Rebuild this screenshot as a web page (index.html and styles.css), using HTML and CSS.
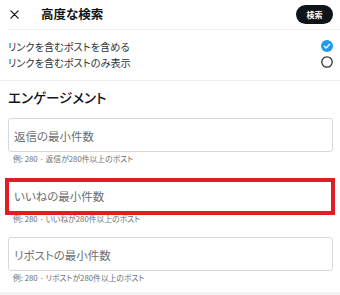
FILE: index.html
```html
<!DOCTYPE html>
<html lang="ja">
<head>
<meta charset="utf-8">
<link rel="stylesheet" href="styles.css">
</head>
<body>
<div class="page">
  <header class="topbar">
    <span class="close">
      <svg width="9" height="9" viewBox="0 0 10 10"><path d="M1 1L9 9M9 1L1 9" stroke="#0f1419" stroke-width="1.4" stroke-linecap="round"/></svg>
    </span>
    <h1 class="title">高度な検索</h1>
    <button class="search-btn">検索</button>
  </header>
  <section class="options">
    <div class="opt-row">
      <span>リンクを含むポストを含める</span>
      <span class="check on">
        <svg width="12" height="12" viewBox="0 0 12 12"><circle cx="6" cy="6" r="6" fill="#1d9bf0"/><path d="M3.3 6.2L5.1 8L8.7 4.3" stroke="#fff" stroke-width="1.4" fill="none" stroke-linecap="round" stroke-linejoin="round"/></svg>
      </span>
    </div>
    <div class="opt-row">
      <span>リンクを含むポストのみ表示</span>
      <span class="check">
        <svg width="12" height="12" viewBox="0 0 12 12"><circle cx="6" cy="6" r="5.2" fill="none" stroke="#333" stroke-width="1.3"/></svg>
      </span>
    </div>
  </section>
  <section class="engage">
    <h2 class="heading">エンゲージメント</h2>
    <div class="field">
      <div class="input">返信の最小件数</div>
      <div class="helper">例: 280 · 返信が280件以上のポスト</div>
    </div>
    <div class="field">
      <div class="input hl">いいねの最小件数<span class="mark"></span></div>
      <div class="helper">例: 280 · いいねが280件以上のポスト</div>
    </div>
    <div class="field">
      <div class="input">リポストの最小件数</div>
      <div class="helper">例: 280 · リポストが280件以上のポスト</div>
    </div>
  </section>
  <div class="footer-band"></div>
</div>
</body>
</html>
```
FILE: styles.css
```css
* { box-sizing: border-box; }
html, body { margin: 0; padding: 0; background: #fff; }
body {
  font-family: "Noto Sans CJK JP", "Noto Sans", sans-serif;
  font-feature-settings: "palt";
  color: #0f1419;
  width: 340px;
  height: 295px;
  overflow: hidden;
}
.page { display: flex; flex-direction: column; }
.topbar {
  height: 30px;
  display: flex;
  align-items: center;
  padding: 0 7px 0 1px;
  border-bottom: 1px solid #eef1f2;
  margin: 0 0 0 8px;
}
.close { width: 10px; height: 10px; display: flex; align-items: center; justify-content: center; }
.title {
  margin: 0 0 0 22px;
  font-size: 12.5px;
  font-weight: 700;
  flex: 1;
  line-height: 18px;
  padding-bottom: 1px;
}
.search-btn {
  border: 0;
  background: #0f1419;
  color: #fff;
  font-family: inherit;
  font-feature-settings: "palt";
  font-size: 8px;
  font-weight: 700;
  height: 19px;
  width: 37px;
  border-radius: 10px;
  padding: 0;
  margin-bottom: 1px;
}
.options {
  padding: 8px 7px 10px 8px;
  border-bottom: 1px solid #eef1f2;
}
.opt-row {
  display: flex;
  justify-content: space-between;
  align-items: center;
  height: 16px;
  font-size: 10.2px;
  color: #333;
}
.check { display: flex; }
.engage { padding: 8px 7px 0 8px; }
.heading {
  margin: 0 0 13px 0;
  font-size: 13.5px;
  font-weight: 500;
  line-height: 16px;
}
.field { margin-bottom: 12.5px; }
.input {
  position: relative;
  height: 34px;
  border: 1px solid #d4d9dc;
  border-radius: 3px;
  padding: 2px 0 0 5px;
  display: flex;
  align-items: center;
  font-size: 11.5px;
  color: #6b6f73;
}
.helper {
  font-size: 7.8px;
  color: #6b6f73;
  line-height: 12px;
  padding: 1px 0 0 5px;
}
.mark {
  position: absolute;
  left: -4px;
  right: -3px;
  top: -1px;
  bottom: -4px;
  border: 4px solid #e31b23;
}
.footer-band {
  position: absolute;
  left: 0;
  right: 0;
  top: 292px;
  height: 3px;
  background: #f2f3f4;
}
```
